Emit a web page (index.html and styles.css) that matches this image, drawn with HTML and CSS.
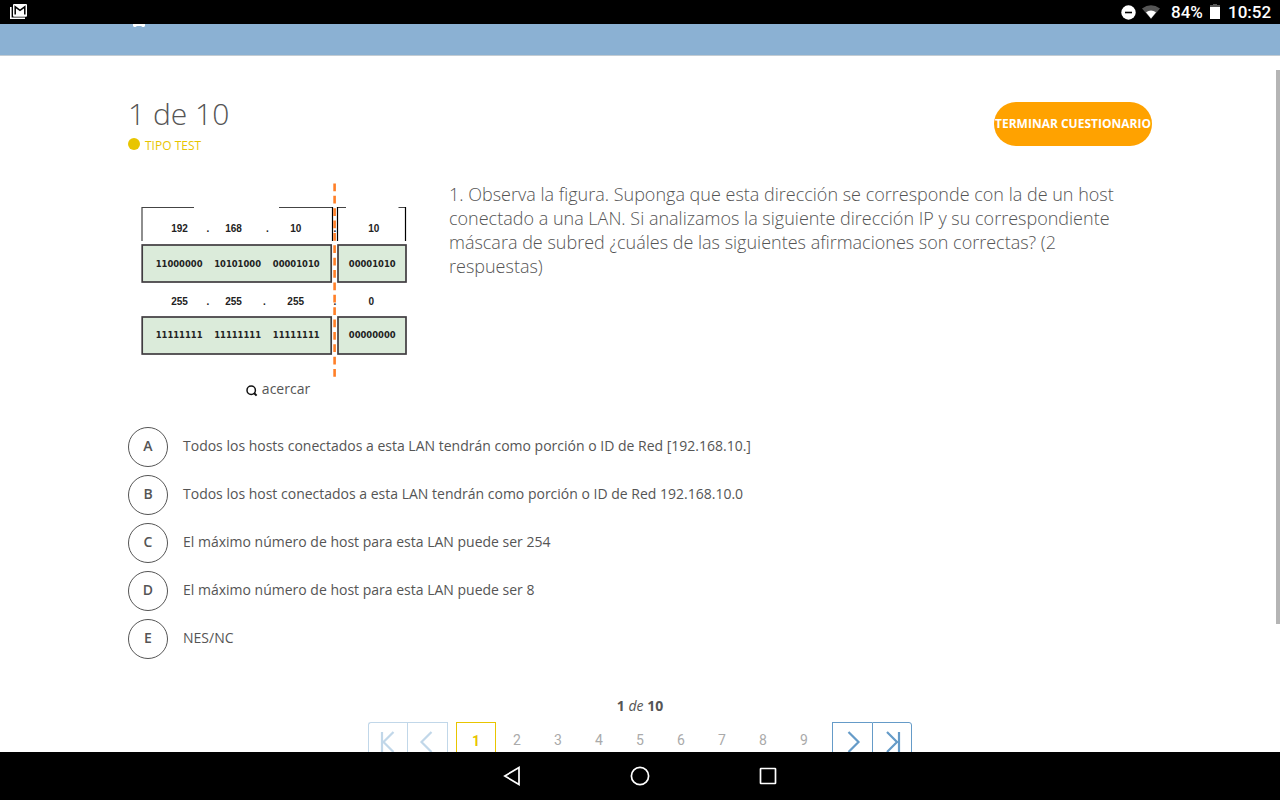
FILE: index.html
```html
<!DOCTYPE html>
<html lang="es">
<head>
<meta charset="utf-8">
<title>Cuestionario</title>
<link rel="stylesheet" href="styles.css">
</head>
<body>
<div class="screen">
  <div class="status">
    <svg class="status-app" width="18" height="16" viewBox="0 0 18 16"><path d="M.8 3v11.300H15" fill="none" stroke="#fff" stroke-width="1.600"/><rect x="3" y="0" width="14" height="12.800" rx="1" fill="#fff"/><path d="M5.200 10.600V2.800L10 6.400l4.800-3.600v7.800" fill="none" stroke="#000" stroke-width="1.500"/></svg>
    <div class="status-right">
      <svg width="15" height="15" viewBox="0 0 15 15"><circle cx="7.500" cy="7.500" r="7.200" fill="#fff"/><path d="M4 7.500h7" stroke="#000" stroke-width="1.600"/></svg>
      <svg class="wifi" width="18" height="14" viewBox="0 0 18 14"><path d="M0 3.500Q9-3 18 3.500L9 14z" fill="#555"/><path d="M4 7.200Q9 4 14 7.200L9 13.500z" fill="#fff"/></svg>
      <span class="percent">84%</span>
      <svg class="battery" width="10" height="15" viewBox="0 0 10 15"><path d="M3 0h4v1h3v3H0V1h3z" fill="#555"/><path d="M0 3h10v12H0z" fill="#fff"/></svg>
      <span class="clock">10:52</span>
    </div>
  </div>
  <div class="page">
    <div class="topbar"><svg class="topbar-icon" width="12" height="3" viewBox="0 0 12 3"><path d="M0 0h12v2l-1 1H9.500L8 2H4L2.500 3H1L0 2z" fill="#fff"/></svg></div>
    <main class="quiz">
      <div class="heading">
        <div>
          <h1>1 de 10</h1>
          <div class="kind"><span class="dot"></span>TIPO TEST</div>
        </div>
        <button class="finish">TERMINAR CUESTIONARIO</button>
      </div>
      <div class="question">
        <div class="figure">
          <svg width="300" height="210" viewBox="128 170 300 210">
            <g fill="none" stroke="#444" stroke-width="1.200">
              <path d="M142 241V207.500H194M279 207.500H333M337.500 207.500H346M398.500 207.500H406"/>
              <path d="M332.500 207V241M337.500 207V241M405.500 207V241" stroke="#000"/>
            </g>
            <g fill="#dbebda" stroke="#403c40" stroke-width="1.700">
              <rect x="142.200" y="245" width="189" height="37"/><rect x="338" y="245" width="68" height="37"/>
              <rect x="142.200" y="317" width="189" height="37"/><rect x="338" y="317" width="68" height="37"/>
            </g>
            <g class="dec">
              <text x="179.500" y="231.500">192</text><text x="207.800" y="231.500">.</text><text x="233.500" y="231.500">168</text><text x="267.300" y="231.500">.</text><text x="295.700" y="231.500">10</text><text x="335" y="231.500">.</text><text x="373.800" y="231.500">10</text>
              <text x="179.500" y="305.200">255</text><text x="207.800" y="305.200">.</text><text x="233.500" y="305.200">255</text><text x="264.500" y="305.200">.</text><text x="295.700" y="305.200">255</text><text x="335" y="305.200">.</text><text x="371.200" y="305.200">0</text>
            </g>
            <g class="bin">
              <text x="155.700" y="267.200" textLength="46.800" lengthAdjust="spacingAndGlyphs">11000000</text><text x="214.200" y="267.200" textLength="46.800" lengthAdjust="spacingAndGlyphs">10101000</text><text x="272.800" y="267.200" textLength="46.800" lengthAdjust="spacingAndGlyphs">00001010</text><text x="348.800" y="267.200" textLength="46.800" lengthAdjust="spacingAndGlyphs">00001010</text>
              <text x="155.700" y="337.500" textLength="46.800" lengthAdjust="spacingAndGlyphs">11111111</text><text x="214.200" y="337.500" textLength="46.800" lengthAdjust="spacingAndGlyphs">11111111</text><text x="272.800" y="337.500" textLength="46.800" lengthAdjust="spacingAndGlyphs">11111111</text><text x="348.800" y="337.500" textLength="46.800" lengthAdjust="spacingAndGlyphs">00000000</text>
            </g>
            <path d="M334.600 183.500V377" stroke="#ff7f27" stroke-width="2.600" stroke-dasharray="7.700 4.670"/>
          </svg>
          <div class="zoom"><svg width="12" height="12" viewBox="0 0 12 12" fill="none" stroke="#111"><circle cx="5.200" cy="5.300" r="4.200" stroke-width="1.500"/><path d="M8 8l2.600 2.600" stroke-width="2"/></svg>acercar</div>
        </div>
        <p>1. Observa la figura. Suponga que esta dirección se corresponde con la de un host<br>conectado a una LAN. Si analizamos la siguiente dirección IP y su correspondiente<br>máscara de subred ¿cuáles de las siguientes afirmaciones son correctas? (2<br>respuestas)</p>
      </div>
      <ul class="options">
        <li><span class="letter">A</span>Todos los hosts conectados a esta LAN tendrán como porción o ID de Red [192.168.10.]</li>
        <li><span class="letter">B</span>Todos los host conectados a esta LAN tendrán como porción o ID de Red 192.168.10.0</li>
        <li><span class="letter">C</span>El máximo número de host para esta LAN puede ser 254</li>
        <li><span class="letter">D</span>El máximo número de host para esta LAN puede ser 8</li>
        <li><span class="letter">E</span>NES/NC</li>
      </ul>
      <div class="count"><b>1</b> <i>de</i> <b>10</b></div>
      <div class="pager">
        <div class="group off">
          <span><svg width="38" height="38" viewBox="0 0 38 38"><path d="M13 9v20M24.500 9L14.500 19l10 10"/></svg></span><span><svg width="38" height="38" viewBox="0 0 38 38"><path d="M22.500 9L12.500 19l10 10"/></svg></span>
        </div>
        <div class="numbers"><span class="current">1</span><span>2</span><span>3</span><span>4</span><span>5</span><span>6</span><span>7</span><span>8</span><span>9</span></div>
        <div class="group on">
          <span><svg width="38" height="38" viewBox="0 0 38 38"><path d="M14.500 9l10 10-10 10"/></svg></span><span><svg width="38" height="38" viewBox="0 0 38 38"><path d="M14 9l10 10-10 10M26 9v20"/></svg></span>
        </div>
      </div>
    </main>
    <div class="scrollbar"></div>
  </div>
  <div class="nav">
    <svg width="24" height="24" viewBox="0 0 24 24"><path d="M19 3.500v17L4.800 12z"/></svg>
    <svg width="24" height="24" viewBox="0 0 24 24"><circle cx="12" cy="12" r="8.600"/></svg>
    <svg width="24" height="24" viewBox="0 0 24 24"><rect x="4.500" y="4.500" width="15" height="15" rx=".5"/></svg>
  </div>
</div>
</body>
</html>
```
FILE: styles.css
```css
* { box-sizing: border-box; }
body { margin: 0; font-family: "Open Sans", sans-serif; color: #555; background: #fff; }
svg { display: block; flex: none; }
.screen { width: 1280px; height: 800px; display: flex; flex-direction: column; overflow: hidden; }
.status { height: 24px; flex: none; background: #000; color: #fff; display: flex; align-items: center; justify-content: space-between; padding: 0 7px 0 10px; font: 500 17px/24px Roboto, sans-serif; }
.status-right { display: flex; align-items: center; }
.wifi { margin: -1px 0 0 6px; }
.percent { margin-left: 11px; width: 33px; white-space: nowrap; }
.battery { margin: -2px 8px 0 6px; }
.clock { white-space: nowrap; width: 45px; }
.page { position: relative; flex: none; height: 728px; overflow: hidden; }
.topbar { height: 32px; background: #8bb1d3; border-bottom: 1px solid #c3ccd3; padding-left: 133px; }
.quiz { padding: 38px 128px 0; }
.heading { display: flex; justify-content: space-between; align-items: flex-start; height: 76px; }
h1 { margin: 0; font-size: 30px; font-weight: 300; line-height: 40px; }
.kind { display: flex; align-items: center; font-size: 12px; line-height: 24px; color: #e8c500; }
.dot { width: 12px; height: 12px; border-radius: 50%; background: #e8c500; margin: -4px 5px 0 0; }
.finish { margin: 8px 0 0; padding: 0; width: 158px; height: 44px; border: 0; border-radius: 22px; background: #ffa200; color: #fff; font: 700 12px/44px "Open Sans", sans-serif; white-space: nowrap; }
.question { display: flex; }
.figure { width: 321px; flex: none; }
.question p { margin: 12px 0 0; font-size: 18px; font-weight: 300; line-height: 24px; white-space: nowrap; }
.dec { font: 700 10px "Liberation Sans", sans-serif; fill: #222; text-anchor: middle; }
.bin { font: 700 9.5px "DejaVu Sans", sans-serif; fill: #222; }
.zoom { display: flex; align-items: center; width: 300px; justify-content: center; gap: 4px; font-size: 14px; line-height: 18px; }
.zoom svg { margin-top: 3px; }
.options { list-style: none; margin: 29px 0 0; padding: 0; display: grid; gap: 8px; }
.options li { display: flex; gap: 15px; height: 40px; font-size: 14px; line-height: 38px; }
.letter { width: 40px; height: 40px; flex: none; border: 1px solid #555; border-radius: 50%; text-align: center; font-weight: 600; line-height: 36px; }
.count { margin-top: 37px; text-align: center; font-size: 14px; line-height: 20px; }
.pager { margin-top: 6px; display: flex; justify-content: center; gap: 8px; }
.group { display: flex; }
.group span { width: 40px; height: 40px; border: 1px solid; border-right-width: 0; display: flex; align-items: center; justify-content: center; }
.group span:last-child { border-right-width: 1px; }
.group path { fill: none; stroke: currentColor; stroke-width: 2.2; }
.off { color: #c1d7e9; }
.on { color: #659bc8; }
.off span:first-child { width: 39px; border-top-left-radius: 3px; }
.off span:last-child { width: 41px; }
.on span:last-child { border-top-right-radius: 3px; }
.numbers { display: flex; gap: 1px; font: 14px/36px Roboto, sans-serif; color: #aaa; }
.numbers span { width: 40px; height: 40px; text-align: center; }
.numbers .current { border: 1px solid #e8c500; color: #e8c500; font-weight: 700; }
.scrollbar { position: absolute; right: 0; top: 46px; width: 4px; height: 554px; background: #b5b5b5; }
.nav { height: 48px; flex: none; background: #000; display: flex; justify-content: center; align-items: center; gap: 104px; }
.nav svg { fill: none; stroke: #fff; stroke-width: 1.7; }
```
